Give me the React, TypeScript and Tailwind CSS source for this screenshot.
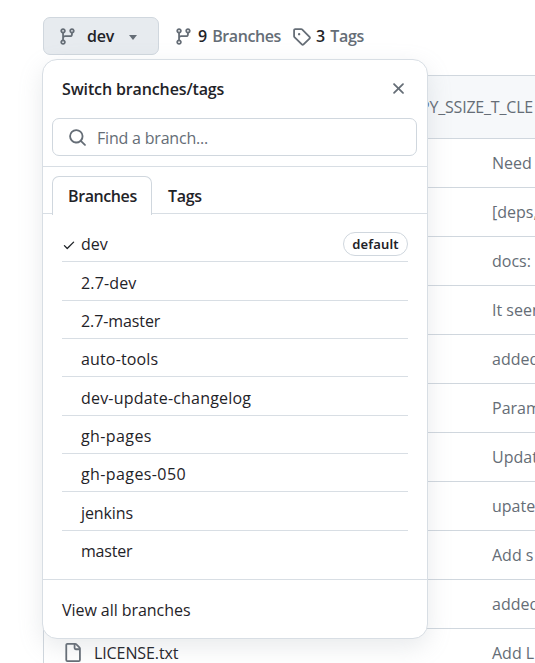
import React from "react";

const paths = {
  branch:
    "M9.5 3.25a2.25 2.25 0 1 1 3 2.122V6A2.5 2.5 0 0 1 10 8.5H6a1 1 0 0 0-1 1v1.128a2.251 2.251 0 1 1-1.5 0V5.372a2.25 2.25 0 1 1 1.5 0v1.836A2.493 2.493 0 0 1 6 7h4a1 1 0 0 0 1-1v-.628A2.25 2.25 0 0 1 9.5 3.25Zm-6 0a.75.75 0 1 0 1.5 0 .75.75 0 0 0-1.5 0Zm8.25-.75a.75.75 0 1 0 0 1.5.75.75 0 0 0 0-1.5ZM4.25 12a.75.75 0 1 0 0 1.5.75.75 0 0 0 0-1.5Z",
  tag: "M1 7.775V2.75C1 1.784 1.784 1 2.75 1h5.025c.464 0 .91.184 1.238.513l6.25 6.25a1.75 1.75 0 0 1 0 2.474l-5.026 5.026a1.75 1.75 0 0 1-2.474 0l-6.25-6.25A1.752 1.752 0 0 1 1 7.775Zm1.5 0c0 .066.026.13.073.177l6.25 6.25a.25.25 0 0 0 .354 0l5.025-5.025a.25.25 0 0 0 0-.354l-6.25-6.25a.25.25 0 0 0-.177-.073H2.75a.25.25 0 0 0-.25.25ZM6 5a1 1 0 1 1 0 2 1 1 0 0 1 0-2Z",
  search:
    "M10.68 11.74a6 6 0 0 1-7.922-8.982 6 6 0 0 1 8.982 7.922l3.04 3.04a.749.749 0 0 1-.326 1.275.749.749 0 0 1-.734-.215ZM11.5 7a4.499 4.499 0 1 0-8.997 0A4.499 4.499 0 0 0 11.5 7Z",
  close:
    "M3.72 3.72a.75.75 0 0 1 1.06 0L8 6.94l3.22-3.22a.749.749 0 0 1 1.275.326.749.749 0 0 1-.215.734L9.06 8l3.22 3.22a.749.749 0 0 1-.326 1.275.749.749 0 0 1-.734-.215L8 9.06l-3.22 3.22a.751.751 0 0 1-1.042-.018.751.751 0 0 1-.018-1.042L6.94 8 3.72 4.78a.75.75 0 0 1 0-1.06Z",
  check:
    "M13.78 4.22a.75.75 0 0 1 0 1.06l-7.25 7.25a.75.75 0 0 1-1.06 0L2.22 9.28a.751.751 0 0 1 .018-1.042.751.751 0 0 1 1.042-.018L6 10.94l6.72-6.72a.75.75 0 0 1 1.06 0Z",
  file: "M2 1.75C2 .784 2.784 0 3.75 0h6.586c.464 0 .909.184 1.237.513l2.914 2.914c.329.328.513.773.513 1.237v9.586A1.75 1.75 0 0 1 13.25 16h-9.5A1.75 1.75 0 0 1 2 14.25Zm1.75-.25a.25.25 0 0 0-.25.25v12.5c0 .138.112.25.25.25h9.5a.25.25 0 0 0 .25-.25V6h-2.75A1.75 1.75 0 0 1 9 4.25V1.5Zm6.75.062V4.25c0 .138.112.25.25.25h2.688l-.011-.013-2.914-2.914-.013-.011Z",
};

function Icon({ name, className }: { name: keyof typeof paths; className: string }) {
  return (
    <svg viewBox="0 0 16 16" fill="currentColor" className={`shrink-0 ${className}`} aria-hidden="true">
      <path d={paths[name]} />
    </svg>
  );
}

const commits = ["Need", "[deps,", "docs:", "It seen", "added", "Param", "Updat", "upate", "Add s", "added"];

const branches = [
  { name: "2.7-dev", row: "h-[39px]", text: "tracking-[0.15px]" },
  { name: "2.7-master", row: "h-[38px]", text: "tracking-[-0.1px]" },
  { name: "auto-tools", row: "h-[38px]", text: "tracking-[0.15px]" },
  { name: "dev-update-changelog", row: "h-[39px]", text: "tracking-[0.2px]" },
  { name: "gh-pages", row: "h-[38px]", text: "tracking-[0.4px]" },
  { name: "gh-pages-050", row: "h-[38px]", text: "tracking-[0.4px]" },
  { name: "jenkins", row: "h-[39px]", text: "tracking-[-0.1px]" },
];

function Toolbar() {
  return (
    <div className="flex h-[75px] items-start pt-[17px] pl-[43px] text-base text-[#656d76]">
      <button className="flex h-[38px] w-[116px] items-center rounded-[7px] border border-[#d0d7de] bg-[#e7ebef] pl-[14px]">
        <Icon name="branch" className="size-[19px]" />
        <span className="ml-[10px] w-[42px] text-left font-semibold tracking-[-0.2px] text-[#1f2328]">dev</span>
        <span className="mt-[3px] border-x-[4.5px] border-t-[5px] border-x-transparent border-t-[#656d76]" />
      </button>
      <a className="ml-[15px] flex h-[38px] w-[118px] items-center whitespace-nowrap">
        <Icon name="branch" className="size-[19px]" />
        <span className="ml-[5px] font-semibold text-[#1f2328]">9</span>
        <span className="ml-[5px] font-semibold tracking-[-0.4px]">Branches</span>
      </a>
      <a className="flex h-[38px] items-center whitespace-nowrap">
        <Icon name="tag" className="size-[19px]" />
        <span className="ml-[5px] font-semibold text-[#1f2328]">3</span>
        <span className="ml-[5px] font-semibold tracking-[-0.3px]">Tags</span>
      </a>
    </div>
  );
}

function FileTable() {
  return (
    <div className="ml-[43px] h-[588px] w-[520px] border-t border-l border-[#d0d7de] text-base whitespace-nowrap text-[#656d76]">
      <div className="flex h-[63px] items-center border-b border-[#d0d7de] bg-[#f6f8fa] pl-[376px] tracking-[-0.2px]">
        PY_SSIZE_T_CLE
      </div>
      {commits.map((message, i) => (
        <div key={i} className="flex h-[49px] items-center border-b border-[#d0d7de] pl-[448px]">
          {message}
        </div>
      ))}
      <div className="flex h-[47px] items-center pl-[19px]">
        <Icon name="file" className="size-[19px]" />
        <span className="ml-[12px] w-[398px] shrink-0 text-[#1f2328]">
          <span className="tracking-[-0.1px]">LICENSE.txt</span>
        </span>
        <span>Add L</span>
      </div>
    </div>
  );
}

function BranchMenu() {
  return (
    <div className="absolute top-[59px] left-[42px] flex h-[580px] w-[386px] flex-col rounded-[15px] border border-[#d8dee4] bg-white text-base text-[#1f2328] shadow-[0_8px_24px_rgba(140,149,159,0.2)]">
      <div className="flex h-[58px] items-center justify-between pr-[19px] pl-[19px]">
        <span className="text-base font-semibold tracking-[-0.13px]">Switch branches/tags</span>
        <Icon name="close" className="-mt-[2px] size-[19px] text-[#656d76]" />
      </div>
      <div className="mr-[10px] ml-[9px] flex h-[38px] shrink-0 items-center rounded-[7px] border border-[#d0d7de] pl-[15px] text-[#656d76]">
        <Icon name="search" className="size-[19px]" />
        <span className="mt-[2px] ml-[10px] tracking-[-0.2px]">Find a branch...</span>
      </div>
      <div className="mt-[10px] flex h-[48px] shrink-0 items-end border-y border-[#d8dee4] pl-[9px] font-semibold">
        <div className="-mb-[2px] flex h-[39px] w-[100px] items-center rounded-t-[7px] border border-b-0 border-[#d0d7de] bg-white pl-[15px]">
          <span className="tracking-[-0.4px]">Branches</span>
        </div>
        <span className="flex h-[35px] items-center pl-[16px] tracking-[-0.3px]">Tags</span>
      </div>
      <div className="mx-[19px] h-[365px] shrink-0">
        <div className="flex h-[48px] items-center border-b border-[#d8dee4] pt-[13px]">
          <Icon name="check" className="mt-[2px] size-[14px]" />
          <span className="ml-[5px] grow">dev</span>
          <span className="-mt-[1px] flex h-[24px] w-[65px] items-center justify-center rounded-full border border-[#d0d7de] pt-[2px] font-['Noto_Sans',sans-serif] text-[13px] font-semibold tracking-[0.15px]">
            default
          </span>
        </div>
        {branches.map((b) => (
          <div key={b.name} className={`flex items-center border-b border-[#d8dee4] pt-[3px] pl-[19px] ${b.row}`}>
            <span className={b.text}>{b.name}</span>
          </div>
        ))}
        <div className="flex h-[38px] items-center pt-[2px] pl-[19px] tracking-[-0.2px]">master</div>
      </div>
      <div className="flex grow items-center border-t border-[#d8dee4] pt-[2px] pl-[19px] tracking-[-0.05px]">View all branches</div>
    </div>
  );
}

export default function App() {
  return (
    <div className="relative h-[663px] w-[535px] overflow-hidden bg-white font-['Open_Sans',sans-serif]">
      <Toolbar />
      <FileTable />
      <BranchMenu />
    </div>
  );
}
